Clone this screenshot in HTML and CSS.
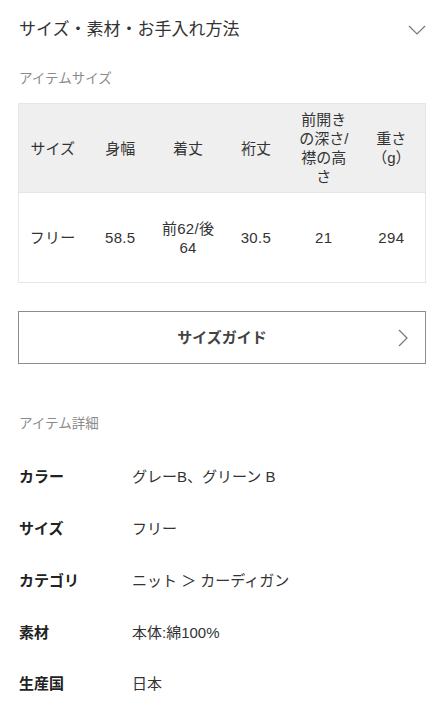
FILE: index.html
```html
<!DOCTYPE html>
<html lang="ja">
<head>
<meta charset="utf-8">
<title>サイズ・素材・お手入れ方法</title>
<link rel="stylesheet" href="styles.css">
</head>
<body>
<main class="page">
  <div class="acc-head">
    <h2 class="acc-title">サイズ・素材・お手入れ方法</h2>
    <svg class="chev-down" width="18" height="10" viewBox="0 0 18 10"><polyline points="1,1 9,9 17,1" fill="none" stroke="#777" stroke-width="1.2"/></svg>
  </div>

  <h3 class="sec-label">アイテムサイズ</h3>
  <table class="size-table">
    <thead>
      <tr>
        <th>サイズ</th>
        <th>身幅</th>
        <th>着丈</th>
        <th>裄丈</th>
        <th>前開き<br>の深さ/<br>襟の高<br>さ</th>
        <th>重さ<br>（g）</th>
      </tr>
    </thead>
    <tbody>
      <tr>
        <td>フリー</td>
        <td>58.5</td>
        <td>前62/後<br>64</td>
        <td>30.5</td>
        <td>21</td>
        <td>294</td>
      </tr>
    </tbody>
  </table>

  <a class="guide-btn" href="#">
    <span class="guide-text">サイズガイド</span>
    <svg class="chev-right" width="10" height="18" viewBox="0 0 10 18"><polyline points="1,1 9,9 1,17" fill="none" stroke="#777" stroke-width="1.2"/></svg>
  </a>

  <h3 class="sec-label detail-label">アイテム詳細</h3>
  <dl class="details">
    <div class="row"><dt>カラー</dt><dd>グレーB、グリーン B</dd></div>
    <div class="row"><dt>サイズ</dt><dd>フリー</dd></div>
    <div class="row"><dt>カテゴリ</dt><dd>ニット ＞ カーディガン</dd></div>
    <div class="row"><dt>素材</dt><dd>本体:綿100%</dd></div>
    <div class="row"><dt>生産国</dt><dd>日本</dd></div>
  </dl>
</main>
</body>
</html>
```

FILE: styles.css
```css
html, body {
  margin: 0;
  padding: 0;
  background: #fff;
}
body {
  font-family: "Liberation Sans", "Noto Sans CJK JP", sans-serif;
  color: #333;
}
.page {
  padding: 0 18px;
}
.acc-head {
  display: flex;
  align-items: center;
  justify-content: space-between;
  padding-top: 18px;
  height: 24px;
}
.acc-title {
  margin: 0;
  font-size: 17px;
  font-weight: 400;
  line-height: 24px;
  color: #333;
  padding-left: 1px;
}
.chev-down {
  display: block;
}
.sec-label {
  margin: 27px 0 0 1px;
  font-size: 13.5px;
  font-weight: 400;
  line-height: 20px;
  color: #8a8a8a;
}
.size-table {
  margin-top: 14px;
  width: 408px;
  border-collapse: collapse;
  table-layout: fixed;
  font-size: 15px;
  color: #333;
}
.size-table th,
.size-table td {
  border-top: 1px solid #e6e6e6;
  border-bottom: 1px solid #e6e6e6;
  text-align: center;
  vertical-align: middle;
  padding: 0 4px;
  line-height: 19px;
  font-weight: 400;
}
.size-table th {
  background: #efefef;
  height: 88px;
}
.size-table td {
  height: 89px;
  letter-spacing: 0.3px;
}
.size-table th:first-child,
.size-table td:first-child {
  border-left: 1px solid #e6e6e6;
}
.size-table th:last-child,
.size-table td:last-child {
  border-right: 1px solid #e6e6e6;
}
.guide-btn {
  margin-top: 28px;
  display: flex;
  align-items: center;
  justify-content: center;
  position: relative;
  height: 51px;
  border: 1px solid #8c8c8c;
  text-decoration: none;
  color: #444;
}
.guide-text {
  font-size: 15px;
  font-weight: 700;
  line-height: 20px;
}
.chev-right {
  position: absolute;
  right: 17px;
  top: 17px;
}
.detail-label {
  margin-top: 50px;
}
.details {
  margin: 16px 0 0;
  padding: 0;
}
.details .row {
  display: flex;
  align-items: center;
  height: 51.75px;
}
.details dt {
  width: 113px;
  padding-left: 1px;
  font-size: 15px;
  font-weight: 700;
  color: #222;
}
.details dd {
  margin: 0;
  font-size: 15px;
  color: #333;
}
```
